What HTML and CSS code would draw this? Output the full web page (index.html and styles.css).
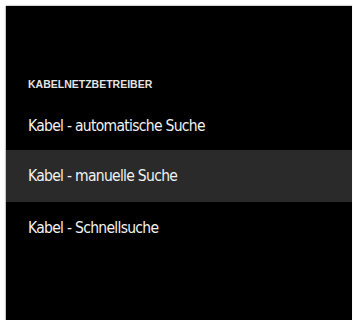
FILE: index.html
```html
<!DOCTYPE html>
<html>
<head>
<meta charset="utf-8">
<link rel="stylesheet" href="styles.css">
</head>
<body>
<div class="panel">
  <div class="header">KABELNETZBETREIBER</div>
  <ul class="menu">
    <li class="item first">Kabel - automatische Suche</li>
    <li class="item selected">Kabel - manuelle Suche</li>
    <li class="item">Kabel - Schnellsuche</li>
  </ul>
</div>
</body>
</html>
```

FILE: styles.css
```css
html, body {
  margin: 0;
  padding: 0;
  background: #ffffff;
}
body {
  width: 353px;
  height: 320px;
  overflow: hidden;
}
.panel {
  margin: 6px 1px 0 6px;
  height: 314px;
  background: #000000;
  box-shadow: -1px 0 1px #c8c8c8, 0 -1px 1px #d8d8d8;
  display: flex;
  flex-direction: column;
}
.header {
  margin-top: 70px;
  padding-left: 22px;
  height: 17px;
  line-height: 17px;
  font-family: "Liberation Sans", Arial, sans-serif;
  font-weight: bold;
  font-size: 10.5px;
  color: #e4e4e4;
}
.menu {
  list-style: none;
  margin: 0;
  padding: 0;
  margin-top: 9px;
}
.item {
  height: 52px;
  line-height: 52px;
  padding-left: 22px;
  font-family: "DejaVu Sans Condensed", "DejaVu Sans", sans-serif;
  font-stretch: condensed;
  font-size: 15.5px;
  letter-spacing: -0.7px;
  color: #f2f2f2;
}
.item.first {
  height: 48px;
  line-height: 48px;
}
.selected {
  background: #2a2a2a;
}
```
